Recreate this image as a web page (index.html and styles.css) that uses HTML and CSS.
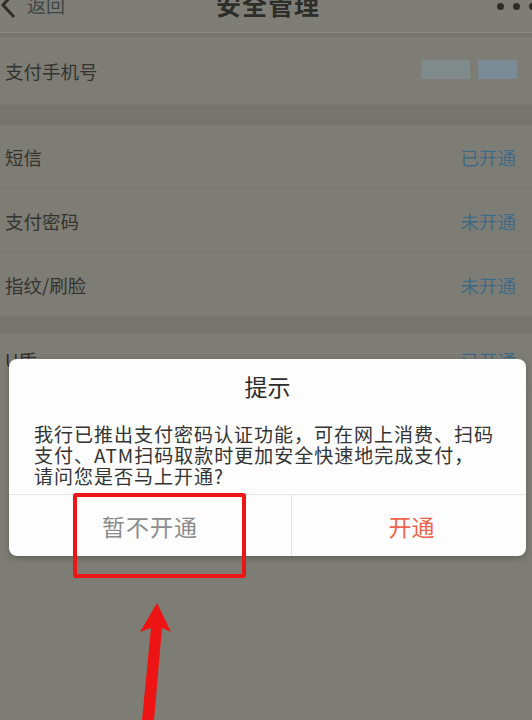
FILE: index.html
```html
<!DOCTYPE html>
<html lang="zh-CN">
<head>
<meta charset="utf-8">
<title>安全管理</title>
<link rel="stylesheet" href="styles.css">
</head>
<body>
<div class="screen">
  <header class="header">
    <div class="back">
      <svg class="back-icon" viewBox="0 0 16 28" width="16" height="28"><polyline points="14,2 3,14 14,26" fill="none" stroke="#2e2e2b" stroke-width="3"/></svg>
      <span class="back-text">返回</span>
    </div>
    <div class="title">安全管理</div>
    <div class="dots"><i></i><i></i><i></i></div>
  </header>
  <div class="gap gap-top"></div>
  <section class="group">
    <div class="row row-phone">
      <span class="label">支付手机号</span>
      <span class="mask"><i class="m1"></i><i class="m2"></i></span>
    </div>
  </section>
  <div class="gap gap-mid"></div>
  <section class="group">
    <div class="row"><span class="label">短信</span><span class="status">已开通</span><span class="chev"></span></div>
    <div class="row"><span class="label">支付密码</span><span class="status">未开通</span><span class="chev"></span></div>
    <div class="row"><span class="label">指纹/刷脸</span><span class="status">未开通</span><span class="chev"></span></div>
  </section>
  <div class="gap gap-low"></div>
  <section class="group group-last">
    <div class="row row-first"><span class="label">U盾</span><span class="status">已开通</span><span class="chev"></span></div>
  </section>

  <div class="dialog">
    <div class="dialog-title">提示</div>
    <div class="dialog-body">我行已推出支付密码认证功能，可在网上消费、扫码<br>支付、ATM扫码取款时更加安全快速地完成支付，<br>请问您是否马上开通?</div>
    <div class="dialog-actions">
      <div class="btn btn-cancel">暂不开通</div>
      <div class="btn btn-ok">开通</div>
    </div>
  </div>

  <div class="mark-box"></div>
  <svg class="mark-arrow" viewBox="0 0 532 720" width="532" height="720">
    <polygon points="157,603 140,632 151,628 142,720 154,720 162,628 171,632" fill="#ef1414"/>
  </svg>
</div>
</body>
</html>
```

FILE: styles.css
```css
* { box-sizing: border-box; }
html, body { margin: 0; padding: 0; }
body {
  width: 532px;
  height: 720px;
  overflow: hidden;
  background: #7b7a72;
  font-family: "Noto Sans CJK SC", "Noto Sans", sans-serif;
}
.screen {
  position: relative;
  width: 532px;
  height: 720px;
  overflow: hidden;
  background: #7b7a72;
}
.header {
  height: 33px;
  display: flex;
  align-items: flex-start;
  justify-content: space-between;
  background: #7f7e76;
  border-bottom: 1px solid #8b8a82;
}
.back {
  display: flex;
  align-items: center;
  margin-top: -9px;
  width: 120px;
}
.back-icon { display: block; }
.back-text {
  margin-left: 11px;
  font-size: 19px;
  line-height: 28px;
  color: #3c4548;
}
.title {
  margin-top: -10px;
  font-size: 25px;
  line-height: 28px;
  font-weight: 700;
  color: #2d2d2a;
  letter-spacing: 1px;
}
.dots {
  width: 120px;
  display: flex;
  justify-content: flex-end;
  gap: 9px;
  padding-top: 3px;
  margin-right: -4px;
}
.dots i {
  display: block;
  width: 7px;
  height: 7px;
  border-radius: 50%;
  background: #2d2d2a;
}
.gap { background: #76756d; }
.gap-top { height: 4px; }
.gap-mid { height: 20px; }
.gap-low { height: 17px; }
.group { background: #7e7d75; }
.group-last { height: 400px; }
.row {
  height: 64px;
  display: flex;
  align-items: center;
  padding-left: 5px;
  border-bottom: 1px solid #7a7971;
}
.row-phone { height: 68px; }
.row-first { height: 52px; }
.label {
  flex: 1;
  font-size: 18.5px;
  color: #33332f;
}
.status {
  font-size: 18.5px;
  color: #3f6a86;
}
.chev {
  width: 16px;
  height: 20px;
  position: relative;
}
.chev::after {
  content: "";
  position: absolute;
  left: 11px;
  top: 5px;
  width: 9px;
  height: 9px;
  border-top: 2px solid #86857d;
  border-right: 2px solid #86857d;
  transform: rotate(45deg);
}
.mask {
  display: flex;
  gap: 8px;
  margin-right: 15px;
  margin-top: -2px;
}
.mask i { display: block; height: 19px; }
.mask .m1 { width: 49px; background: #7f8a8b; }
.mask .m2 { width: 39px; background: #7a8b96; }

.dialog {
  position: absolute;
  left: 9px;
  top: 359px;
  width: 517px;
  background: #fdfdfd;
  border-radius: 8px;
  box-shadow: 0 2px 6px rgba(0,0,0,0.25);
  overflow: hidden;
}
.dialog-title {
  padding-top: 13px;
  text-align: center;
  font-size: 23px;
  line-height: 29px;
  color: #2b2b2b;
}
.dialog-body {
  padding: 22px 10px 8px 25px;
  font-size: 19px;
  letter-spacing: 1px;
  line-height: 21px;
  color: #333333;
  white-space: nowrap;
}
.dialog-actions {
  display: flex;
  height: 62px;
  border-top: 1px solid #e4e4e4;
}
.btn {
  display: flex;
  align-items: center;
  justify-content: center;
  font-size: 23px;
}
.btn-cancel {
  width: 283px;
  color: #8c8c8c;
  border-right: 1px solid #e4e4e4;
  letter-spacing: 1px;
}
.btn-ok {
  flex: 1;
  color: #f0634d;
  padding-left: 5px;
}

.mark-box {
  position: absolute;
  left: 73px;
  top: 493px;
  width: 173px;
  height: 85px;
  border: 4px solid #ec1616;
  border-radius: 3px;
}
.mark-arrow {
  position: absolute;
  left: 0;
  top: 0;
}
```
